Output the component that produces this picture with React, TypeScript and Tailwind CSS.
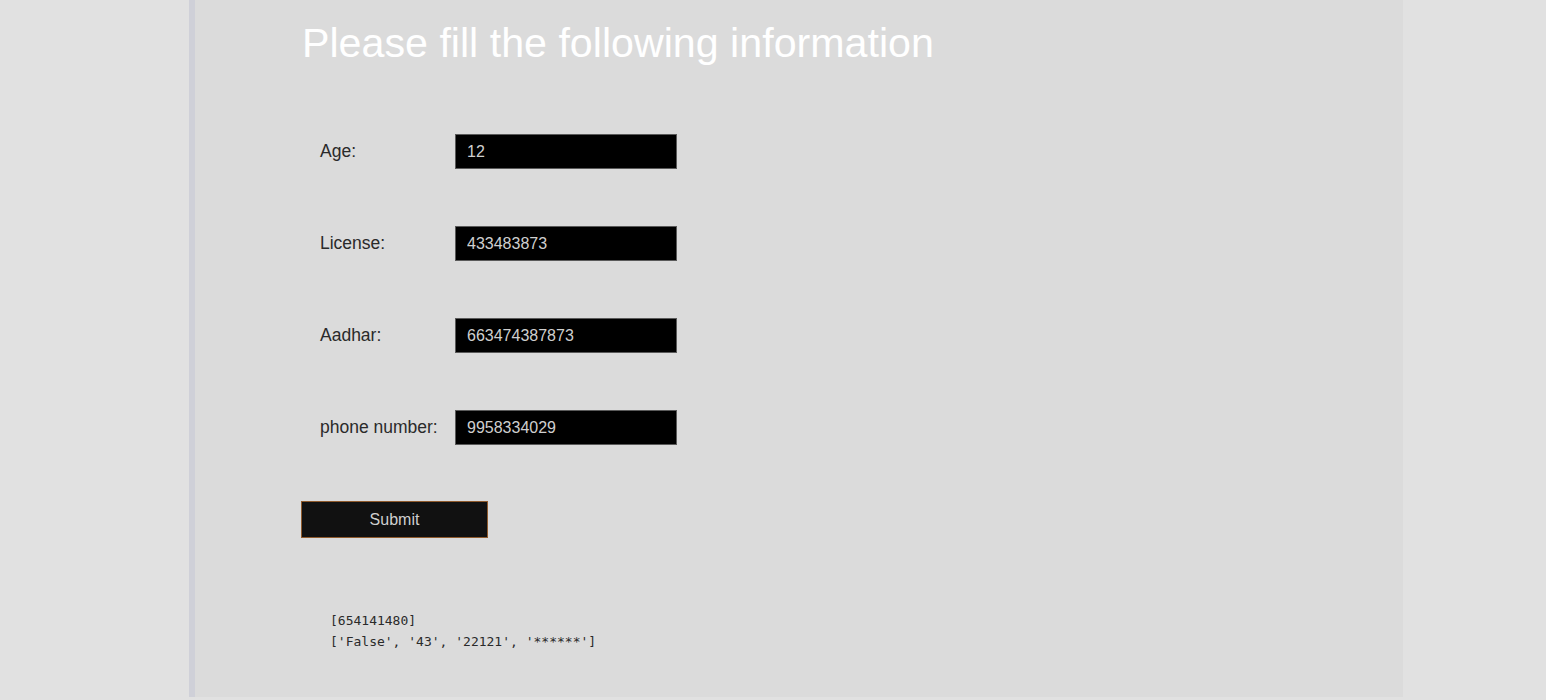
import React from 'react';

const fields = [
  { label: 'Age:', value: '12' },
  { label: 'License:', value: '433483873' },
  { label: 'Aadhar:', value: '663474387873' },
  { label: 'phone number:', value: '9958334029' },
];

const App = () => {
  return (
    <div className="min-h-[700px] w-full bg-[#e1e1e1] font-['Liberation_Sans',Arial,sans-serif]">
      <div className="ml-[189px] h-[697px] w-[1214px] border-l-[6px] border-[#cfd0d8] bg-[#dbdbdb]">
        <h1 className="ml-[107px] pt-[20px] text-[41.2px] leading-[47px] font-normal text-white">
          Please fill the following information
        </h1>

        <form className="mt-[67px] flex flex-col" onSubmit={(e) => e.preventDefault()}>
          <div className="ml-[125px] flex flex-col gap-[57px]">
            {fields.map((f) => (
              <div key={f.label} className="flex h-[35px] items-center">
                <label className="w-[135px] text-[17.5px] text-[#2a2a2a]">{f.label}</label>
                <input
                  type="text"
                  defaultValue={f.value}
                  className="h-[35px] w-[222px] border border-[#5a5a5a] bg-black px-[11px] text-[16px] text-[#cfcfcf] outline-none"
                />
              </div>
            ))}
          </div>

          <button
            type="submit"
            className="ml-[106px] mt-[56px] h-[37px] w-[187px] border border-[#8f5a2c] bg-[#111111] text-[16px] text-[#cfcfcf]"
          >
            Submit
          </button>
        </form>

        <pre className="ml-[135px] mt-[72px] font-['DejaVu_Sans_Mono',monospace] text-[13px] leading-[21px] text-[#2a2a2a]">
          {"[654141480]\n['False', '43', '22121', '******']"}
        </pre>
      </div>
    </div>
  );
};

export default App;
